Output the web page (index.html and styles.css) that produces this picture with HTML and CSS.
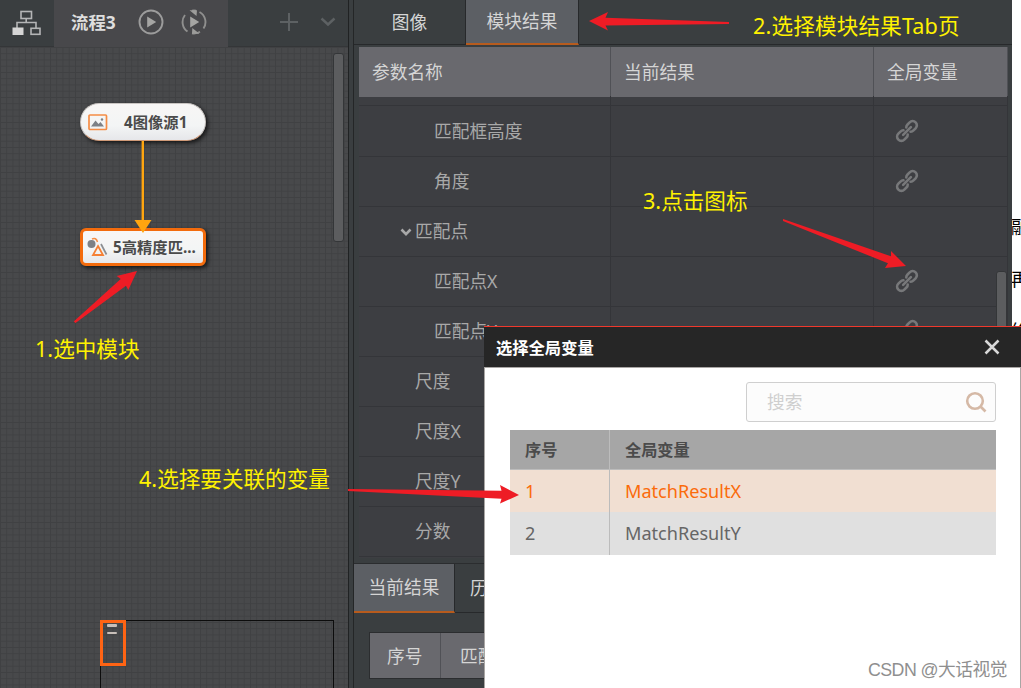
FILE: index.html
```html
<!DOCTYPE html>
<html lang="zh-CN">
<head>
    <meta charset="UTF-8">
    <title>选择全局变量</title>
    <link rel="stylesheet" href="styles.css">
</head>
<body>
    <svg class="defs">
        <symbol id="link" viewBox="0 0 24 24">
            <g transform="translate(12 12) rotate(-45)" fill="none" stroke="#77787a" stroke-width="2.6" stroke-linecap="round">
                <path d="M-2,-3 Q-3,-4.2 -5,-4.2 H-8 A4.2 4.2 0 0 0 -8 4.2 H-5 Q-3,4.2 -2,3"/>
                <path d="M2,-3 Q3,-4.2 5,-4.2 H8 A4.2 4.2 0 0 1 8 4.2 H5 Q3,4.2 2,3"/>
                <path d="M-5.5,0 H5.5"/>
            </g>
        </symbol>
    </svg>
    <div class="app">
        <section class="flow">
            <header class="flow-bar">
                <div class="flow-menu">
                    <svg width="30" height="26" viewBox="0 0 30 26" fill="none" stroke="#b4b5b6" stroke-width="1.6">
                        <rect x="9" y="1.5" width="10.5" height="7"/>
                        <path d="M14.2 8.5V12.5M5 18.5V12.5H24V18.5"/>
                        <rect x="1" y="18" width="10" height="6.5" fill="#d5d5d5" stroke="#d5d5d5" stroke-width="1"/>
                        <rect x="19" y="18.3" width="9" height="6"/>
                    </svg>
                </div>
                <div class="flow-tab">
                    <b>流程3</b>
                    <svg width="26" height="26" viewBox="0 0 26 26" fill="none" stroke="#9c9c9c" stroke-width="1.9">
                        <circle cx="13" cy="13" r="11.5"/>
                        <path d="M9.2 7.5L18.2 13L9.2 18.5Z" fill="#a5a5a3" stroke="none"/>
                    </svg>
                    <svg width="26" height="26" viewBox="0 0 26 26" fill="none" stroke="#8f8f8e" stroke-width="1.9">
                        <path d="M6.5 22.5A11.5 11.5 0 0 1 4 6M11 1.7A11.5 11.5 0 0 1 15 1.7M18.5 3A11.5 11.5 0 0 1 22.5 19.5M11 24.3A11.5 11.5 0 0 0 19 22.8"/>
                        <path d="M8.5 1.2H16L15.5 7Z M18.5 24.8H11L11.3 19Z" fill="#9c9c9a" stroke="none"/>
                        <path d="M9.2 7.5L18.2 13L9.2 18.5Z" fill="#a5a5a3" stroke="none"/>
                    </svg>
                </div>
                <div class="flow-tools">
                    <svg width="18" height="18" viewBox="0 0 18 18" stroke="#5d6163" stroke-width="2"><path d="M9 0V18M0 9H18"/></svg>
                    <svg width="16" height="10" viewBox="0 0 16 10" fill="none" stroke="#5d6163" stroke-width="2.4"><path d="M1.5 1.5L8 7.5L14.5 1.5"/></svg>
                </div>
            </header>
            <div class="canvas">
                <div class="node node-source">
                    <svg width="20" height="17" viewBox="0 0 20 17">
                        <rect x="1" y="1" width="17.5" height="14.5" rx="1" fill="none" stroke="#f58d45" stroke-width="1.7"/>
                        <path d="M3 12.5L7.5 6.5L10.5 10L12.5 8L16 12.5Z" fill="#7d8186"/>
                        <circle cx="14" cy="5.5" r="1.2" fill="#7d8186"/>
                    </svg>
                    <span>4图像源1</span>
                </div>
                <div class="node node-match">
                    <svg width="21" height="20" viewBox="0 0 21 20" fill="none">
                        <path d="M5 2Q9 0 10.5 5" stroke="#f58d45" stroke-width="1.5"/>
                        <circle cx="4.5" cy="7" r="4" fill="#7d8186"/>
                        <path d="M11 9L16 18H6Z" stroke="#f58035" stroke-width="1.8"/>
                        <path d="M14 7L19.5 17.5" stroke="#8b8e92" stroke-width="1.7"/>
                    </svg>
                    <span>5高精度匹...</span>
                </div>
                <svg class="edge" width="18" height="92" viewBox="0 0 18 92" fill="#ffa50f">
                    <path d="M7.6 0H10V79H17.5L9 92L.5 79H7.6Z"/>
                </svg>
                <div class="scroll flow-scroll"></div>
                <div class="minimap">
                    <div class="viewport">
                        <i></i><i></i>
                    </div>
                </div>
            </div>
        </section>

        <section class="result">
            <nav class="tabs">
                <div class="tab">图像</div>
                <div class="tab active">模块结果</div>
            </nav>
            <div class="params">
                <div class="row head"><span>参数名称</span><span>当前结果</span><span>全局变量</span></div>
                <div class="row stub"><span></span><span></span><span></span></div>
                <div class="row"><span class="l2">匹配框高度</span><span></span><span><svg class="link"><use href="#link"/></svg></span></div>
                <div class="row"><span class="l2">角度</span><span></span><span><svg class="link"><use href="#link"/></svg></span></div>
                <div class="row"><span class="l1"><svg class="fold" width="12" height="9" viewBox="0 0 12 9"><path d="M1.5 1.5L6 6.2L10.5 1.5" fill="none" stroke="#a8a8a8" stroke-width="2.6"/></svg>匹配点</span><span></span><span></span></div>
                <div class="row"><span class="l2">匹配点X</span><span></span><span><svg class="link"><use href="#link"/></svg></span></div>
                <div class="row"><span class="l2">匹配点Y</span><span></span><span><svg class="link"><use href="#link"/></svg></span></div>
                <div class="row"><span class="l1">尺度</span><span></span><span></span></div>
                <div class="row"><span class="l1">尺度X</span><span></span><span></span></div>
                <div class="row"><span class="l1">尺度Y</span><span></span><span></span></div>
                <div class="row"><span class="l1">分数</span><span></span><span></span></div>
                <div class="scroll param-scroll"></div>
            </div>
            <nav class="tabs history-tabs">
                <div class="tab active">当前结果</div>
                <div class="tab">历史结果</div>
            </nav>
            <div class="history">
                <span>序号</span><span>匹配框</span>
            </div>
        </section>

        <aside class="page-text"><p>融</p><p>再</p><p>终</p></aside>
    </div>

    <div class="dialog">
        <header><b>选择全局变量</b>
            <svg width="16" height="16" viewBox="0 0 16 16" stroke="#d8d8d8" stroke-width="2.5"><path d="M1.5 1.5L14.5 14.5M14.5 1.5L1.5 14.5"/></svg>
        </header>
        <div class="dialog-body">
            <div class="search">
                <span>搜索</span>
                <svg width="22" height="22" viewBox="0 0 22 22" fill="none" stroke="#d5b9a6" stroke-width="2.6"><circle cx="10" cy="10" r="7.8"/><path d="M15.5 15.5L20.5 20.5"/></svg>
            </div>
            <div class="vars">
                <div class="var var-head"><span>序号</span><span>全局变量</span></div>
                <div class="var selected"><span>1</span><span>MatchResultX</span></div>
                <div class="var"><span>2</span><span>MatchResultY</span></div>
            </div>
        </div>
    </div>

    <!-- step notes -->
    <svg class="arrows" width="1021" height="688" viewBox="0 0 1021 688" fill="#ee1c25">
        <path d="M137 271L128.3 290L126 285.7L75.5 323L73.7 321.5L120.7 279L116.7 276Z"/>
        <path d="M589 21L608 12L605.5 17.8L729 22V24L605.5 25.5L608 30.5Z"/>
        <path d="M906 266L885 268L888 263.3L783 221V219L891 256.3V251Z"/>
        <path d="M519 495L500 503.5L501.5 498.7L348 491V489L501.5 490.7L500 485Z"/>
    </svg>
    <div class="note note-1">1.选中模块</div>
    <div class="note note-2">2.选择模块结果Tab页</div>
    <div class="note note-3">3.点击图标</div>
    <div class="note note-4">4.选择要关联的变量</div>
    <div class="watermark">CSDN @大话视觉</div>
</body>
</html>
```
FILE: styles.css
```css
* {
    box-sizing: border-box;
}
body {
    margin: 0;
    width: 1021px;
    height: 688px;
    overflow: hidden;
    position: relative;
    background: #fff;
    font-family: "Noto Sans", "Noto Sans CJK SC", sans-serif;
    font-size: 17.7px;
    line-height: 24px;
    white-space: nowrap;
}
.defs {
    display: none;
}
.app {
    display: flex;
    height: 688px;
}

/* flow editor */
.flow {
    width: 348px;
    display: flex;
    flex-direction: column;
}
.flow-bar {
    display: flex;
    height: 47px;
    background: #3a3e40;
    border-bottom: 1px solid #343638;
}
.flow-menu {
    width: 54px;
    padding: 10px 0 0 12px;
}
.flow-tab {
    width: 174px;
    height: 47px;
    padding: 0 0 4px 17px;
    display: flex;
    align-items: center;
    background: #48484b;
    color: #dedede;
}
.flow-tab b {
    width: 67px;
    font-size: 17.4px;
}
.flow-tab svg {
    flex: none;
    margin-right: 17px;
}
.flow-tools {
    flex: 1;
    display: flex;
    align-items: center;
    justify-content: flex-end;
    gap: 22px;
    padding: 0 12px 2px 0;
}
.canvas {
    flex: 1;
    position: relative;
    overflow: hidden;
    background-color: #48494b;
    background-image: linear-gradient(to right, #404143 1px, transparent 1px), linear-gradient(#404143 1px, transparent 1px);
    background-size: 6.25px 6.25px;
}
.node {
    position: absolute;
    left: 80px;
    width: 125.5px;
    height: 38px;
    display: flex;
    align-items: center;
    color: #4b4b4b;
    font-size: 15.3px;
    font-weight: bold;
    background: linear-gradient(#f8f6f5, #f3f5f5 60%, #e6e7ea);
    box-shadow: 2px 2px 4px rgba(0, 0, 0, 0.7);
}
.node-source {
    top: 56px;
    border: 1px solid #c9c5c2;
    border-bottom-color: #d09a78;
    border-radius: 19px;
    padding-left: 7px;
}
.node-source span {
    margin-left: 16px;
}
.node-match {
    top: 181px;
    border: 3px solid #f36b0c;
    border-radius: 6px;
    padding-left: 4px;
}
.node-match span {
    margin-left: 5px;
}
.edge {
    position: absolute;
    left: 134px;
    top: 94px;
}
.scroll {
    position: absolute;
    width: 11px;
    background: #5c5d5f;
    border: 1px solid #343638;
    border-radius: 3px;
}
.flow-scroll {
    left: 333px;
    top: 6px;
    height: 189px;
}
.minimap {
    position: absolute;
    left: 100px;
    top: 573px;
    width: 234px;
    height: 80px;
    border: 1px solid #0c0c0c;
}
.viewport {
    width: 26px;
    height: 46px;
    margin: -1px;
    border: 3px solid #ff6414;
    padding: 1px 4px;
    display: flex;
    flex-direction: column;
    gap: 5px;
}
.viewport i {
    height: 2.5px;
    width: 10px;
    background: #c8bfb9;
    border-radius: 1px;
}

/* results */
.result {
    width: 664px;
    background: #3a3e40;
    border-left: 1px solid #202223;
    box-shadow: inset 4px 0 0 #3a3e40, inset 5px 0 0 #242627;
    padding-left: 6px;
    overflow: hidden;
    display: flex;
    flex-direction: column;
}
.tabs {
    height: 45px;
    flex: none;
    display: flex;
    color: #d5d5d5;
    border-bottom: 1px solid #27292b;
    margin-left: -1px;
}
.tab {
    width: 112px;
    height: 45px;
    padding-bottom: 1px;
    display: flex;
    align-items: center;
    justify-content: center;
    border-right: 1px solid #27292b;
}
.tab.active {
    width: 113px;
    background: #5c5f64;
    border-bottom: 2px solid #b75b1d;
}
.params {
    position: relative;
    flex: none;
    height: 511px;
    margin: 2px 4px 5px 4px;
    overflow: hidden;
    background: #3d3e42;
    color: #a8a8a8;
}
.row {
    display: grid;
    grid-template-columns: 252px 263px 134px;
    height: 50px;
    line-height: 50px;
}
.row span {
    padding-left: 13px;
    border-bottom: 1px solid #343539;
    border-right: 1px solid #343539;
}
.row.head {
    background: #69696e;
    color: #d5d5d5;
    line-height: 51px;
}
.row.head span {
    border-bottom: 0;
    border-right-color: #505156;
}
.row.stub {
    height: 10px;
}
.row:not(.head) {
    position: relative;
    top: -1px;
}
.row .l1 {
    padding-left: 56px;
}
.row .l2 {
    padding-left: 75px;
}
.row .fold {
    margin: 0 3px 1px -15px;
}
.link {
    display: block;
    width: 24px;
    height: 24px;
    margin: 13px 0 0 8px;
}
.param-scroll {
    right: 1px;
    top: 224px;
    height: 90px;
}
.history-tabs {
    height: 50px;
    border-top: 1px solid #2b2d2f;
}
.history-tabs .tab {
    width: 101px;
    height: 49px;
}
.history-tabs .tab + .tab {
    justify-content: flex-start;
    padding-left: 15px;
}
.history {
    margin: 19px 0 0 14px;
    height: 47px;
    flex: none;
    display: flex;
    background: #69696e;
    border: 1px solid #2b2d2f;
    color: #d5d5d5;
    line-height: 46px;
}
.history span {
    width: 71px;
    padding-left: 17px;
    border-right: 1px solid #505156;
}
.history span + span {
    width: 150px;
    padding-left: 19px;
}
.page-text {
    width: 9px;
    overflow: hidden;
    padding-top: 201px;
    font-size: 18px;
    line-height: 52px;
    color: #000;
}
.page-text p {
    margin: 0 0 0 -1px;
}

/* variable dialog */
.dialog {
    position: absolute;
    left: 484px;
    top: 326px;
    width: 537px;
    height: 362px;
    background: #fff;
    border-top: 1px solid #f0382c;
}
.dialog header {
    height: 40px;
    background: #262626;
    color: #fff;
    display: flex;
    align-items: center;
    justify-content: space-between;
    padding: 0 21px 0 12px;
    font-size: 16.3px;
}
.dialog header b {
    padding-top: 2px;
}
.dialog-body {
    height: 322px;
    border: 1px solid #a9a6a4;
    border-bottom: 0;
    padding: 14px 24px 0 25px;
}
.search {
    width: 250px;
    height: 40px;
    margin-left: auto;
    border: 1px solid #cfcfcf;
    border-radius: 3px;
    background: #fcfcfc;
    color: #cfcfcf;
    display: flex;
    align-items: center;
    justify-content: space-between;
    padding: 0 8px 0 20px;
}
.vars {
    margin-top: 8px;
}
.var {
    display: grid;
    grid-template-columns: 100px 1fr;
    height: 43px;
    line-height: 42px;
    background: #e0e0e0;
    color: #666;
    font-size: 18.1px;
}
.var span {
    padding-left: 15px;
}
.var span:first-child {
    border-right: 1px solid #bcbcbc;
}
.var.selected {
    height: 42px;
    background: #f1dfd2;
    color: #fb6b0b;
}
.var-head {
    height: 40px;
    line-height: 41px;
    background: #a6a6a6;
    color: #4b4b4b;
    font-size: 16.2px;
    font-weight: bold;
    border-bottom: 1px solid #bcbcbc;
}

.arrows {
    position: absolute;
    left: 0;
    top: 0;
}
.note {
    position: absolute;
    color: #fff200;
    font-size: 21.6px;
    line-height: 30px;
}
.note-1 {
    left: 35px;
    top: 334px;
}
.note-2 {
    left: 753px;
    top: 11px;
    letter-spacing: 0.15px;
}
.note-3 {
    left: 643px;
    top: 186px;
}
.note-4 {
    left: 139px;
    top: 464px;
}
.watermark {
    position: absolute;
    left: 868px;
    top: 658px;
    font-family: "Liberation Sans", "Noto Sans CJK SC", sans-serif;
    font-size: 17.8px;
    letter-spacing: -0.55px;
    color: #8f8f8f;
}
```
